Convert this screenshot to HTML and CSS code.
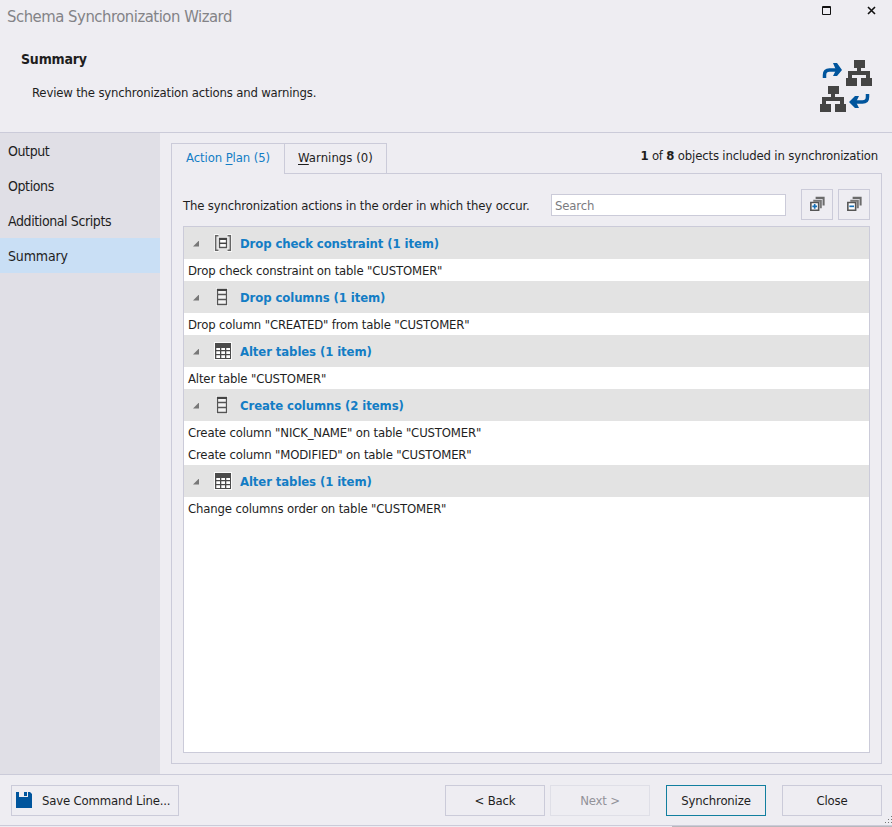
FILE: index.html
```
<!DOCTYPE html>
<html lang="en">
<head>
<meta charset="utf-8">
<title>Schema Synchronization Wizard</title>
<link rel="stylesheet" href="styles.css">
</head>
<body>
<svg class="defs" width="0" height="0">
  <symbol id="check" viewBox="0 0 18 18"><path fill="none" stroke="#f6f6f6" stroke-width="3" d="M5 1.500H1.500v15H5M13 1.500h3.500v15H13"/><path fill="none" stroke="#666" stroke-width="1.500" d="M4.500 1.700H1.700v14.600h2.800M13.500 1.700h2.800v14.600h-2.800"/><path fill="#f6f6f6" d="M4 3h10v12H4z"/><path fill="#fff" stroke="#555" stroke-width="1.300" d="M5.500 4.500h7v9h-7z"/><path stroke="#444" stroke-width="2" d="M5 5h8"/><path stroke="#444" stroke-width="1.500" d="M5 9.300h8"/></symbol>
  <symbol id="column" viewBox="0 0 18 18"><path fill="#fafafa" d="M2 0h12v18H2z"/><path fill="#f3f3f3" stroke="#555" stroke-width="1.300" d="M3.500 1.500h9v15h-9z"/><path stroke="#444" stroke-width="2" d="M3 2h10"/><path stroke="#555" stroke-width="1.300" d="M3 6.500h10M3 11.500h10"/></symbol>
  <symbol id="table" viewBox="0 0 18 18"><path fill="#fafafa" d="M0 0h18v18H0z"/><path fill="#4b4b4b" d="M1 1h16v16H1z"/><path fill="#fff" d="M2.300 6H6v2H2.300zM7.300 6H11v2H7.300zM12.300 6H16v2h-3.700zM2.300 9.300H6V12H2.300zM7.300 9.300H11V12H7.300zM12.300 9.300H16V12h-3.700zM2.300 13.300H6V16H2.300zM7.300 13.300H11V16H7.300zM12.300 13.300H16V16h-3.700z"/></symbol>
  <symbol id="stack" viewBox="0 0 16 16"><path fill="none" stroke="#6b6b6b" stroke-width="2.200" d="M6 2h8.500v8"/><path fill="none" stroke="#777" stroke-width="2.200" d="M3.500 5h8v8"/><path fill="#fff" stroke="#555" stroke-width="1.700" d="M.9 6.900h8.300v8.300H.9z"/></symbol>
  <symbol id="tree" viewBox="0 0 26 26"><path fill="#444" d="M8 0h11v8h-4v3h9v7h2v8H15v-8h5v-3H6v3h5v8H0v-8h2v-7h9V8H8z"/></symbol>
</svg>
<div class="window">
  <header class="header">
    <div class="titlebar">
      <h1>Schema Synchronization Wizard</h1>
      <svg class="controls" width="56" height="12" viewBox="0 0 56 12"><path fill="none" stroke="#111" d="M.5 1.500h8v8h-8zM0 2.500h9"/><path stroke="#111" stroke-width="1.600" d="m46 2 7 7m0-7-7 7"/></svg>
    </div>
    <div class="intro">
      <div>
        <h2>Summary</h2>
        <p>Review the synchronization actions and warnings.</p>
      </div>
      <svg width="54" height="54" viewBox="0 0 54 54"><use href="#tree" x="27" y="0" width="26" height="26"/><use href="#tree" x="1" y="26" width="26" height="26"/><path fill="none" stroke="#00559d" stroke-width="3.500" d="M5.500 18v-3q0-5 5-5h9M48.500 34v3q0 5-5 5h-9"/><path fill="#00559d" d="M14 3h4l5 7-5 6h-4l3-6zM40 36h-4l-6 6 6 6h4l-3-6z"/></svg>
    </div>
  </header>
  <div class="middle">
    <nav class="steps"><a>Output</a><a>Options</a><a>Additional Scripts</a><a class="current">Summary</a></nav>
    <main class="content">
      <div class="tabs">
        <div class="tab active">Action&nbsp;<u>P</u>lan (5)</div>
        <div class="tab"><u>W</u>arnings (0)</div>
        <div class="count"><b>1</b> of <b>8</b> objects included in synchronization</div>
      </div>
      <section class="panel">
        <div class="toolbar">
          <span class="hint">The synchronization actions in the order in which they occur.</span>
          <input class="search" placeholder="Search">
          <button class="button tool"><svg width="15" height="15" viewBox="0 0 16 16"><use href="#stack"/><path stroke="#176fb5" stroke-width="1.800" d="M2.500 11h5M5 8.500v5"/></svg></button>
          <button class="button tool"><svg width="15" height="15" viewBox="0 0 16 16"><use href="#stack"/><path stroke="#176fb5" stroke-width="1.800" d="M2.500 11h5"/></svg></button>
        </div>
        <div class="list">
          <div class="group"><i></i><svg><use href="#check"/></svg><b>Drop check constraint (1 item)</b></div>
          <div class="row">Drop check constraint on table "CUSTOMER"</div>
          <div class="group"><i></i><svg><use href="#column"/></svg><b>Drop columns (1 item)</b></div>
          <div class="row">Drop column "CREATED" from table "CUSTOMER"</div>
          <div class="group"><i></i><svg><use href="#table"/></svg><b>Alter tables (1 item)</b></div>
          <div class="row">Alter table "CUSTOMER"</div>
          <div class="group"><i></i><svg><use href="#column"/></svg><b>Create columns (2 items)</b></div>
          <div class="row">Create column "NICK_NAME" on table "CUSTOMER"</div>
          <div class="row">Create column "MODIFIED" on table "CUSTOMER"</div>
          <div class="group"><i></i><svg><use href="#table"/></svg><b>Alter tables (1 item)</b></div>
          <div class="row">Change columns order on table "CUSTOMER"</div>
        </div>
      </section>
    </main>
  </div>
  <footer class="footer">
    <button class="button save"><svg width="16" height="16" viewBox="0 0 16 16"><path fill="#00559d" d="M0 0h3v5h9V0h2l2 2v14H0z"/><path fill="#00559d" d="M8 0h3v4H8z"/></svg>Save Command Line...</button>
    <button class="button">&lt; Back</button>
    <button class="button next" disabled>Next &gt;</button>
    <button class="button sync">Synchronize</button>
    <button class="button close">Close</button>
    <svg class="grip" width="8" height="8" viewBox="0 0 8 8"><path fill="#777" d="M6 0h1v1H6zM3 3h1v1H3zM6 3h1v1H6zM0 6h1v1H0zM3 6h1v1H3zM6 6h1v1H6z"/></svg>
  </footer>
  <div class="edge"></div>
</div>
</body>
</html>
```
FILE: styles.css
```
* { box-sizing: border-box; }
body { margin: 0; background: #eeedf2; color: #1e1e1e; font: 13px/16px "DejaVu Sans Condensed", "DejaVu Sans", sans-serif; letter-spacing: -.17px; }
.defs, .grip { position: absolute; }
.window { display: flex; flex-direction: column; width: 892px; height: 827px; overflow: hidden; }
.header { height: 133px; border-bottom: 1px solid #cbcbd9; }
.titlebar { display: flex; justify-content: space-between; height: 46px; padding: 5px 14px 0 7px; }
h1 { margin: 0; font-size: 16.5px; font-weight: 400; line-height: 24px; color: #838387; letter-spacing: -.47px; }
.intro { display: flex; justify-content: space-between; padding: 4px 19px 0 21px; }
.intro > svg { margin-top: 10px; }
h2 { margin: 0; font-size: 14px; line-height: 18px; letter-spacing: -.2px; }
.intro p { margin: 17px 0 0 11px; }
.middle { display: flex; height: 641px; }
.steps { width: 160px; background: #e0dfe6; }
.steps a { display: block; height: 35px; padding-left: 8px; font-size: 14px; line-height: 36px; letter-spacing: -.4px; }
.steps .current { background: #c9dff5; letter-spacing: -.15px; }
.content { flex: 1; display: flex; flex-direction: column; padding: 10px 10px 10px 11px; }
.tabs { display: flex; height: 31px; margin-bottom: -1px; z-index: 1; }
.tab { height: 31px; padding: 0 0 0 13px; border: 1px solid #cbcbd9; border-left: 0; line-height: 28px; width: 102px; letter-spacing: .05px; }
.tab.active { width: 114px; padding-left: 14px; border-left: 1px solid #cbcbd9; border-bottom: 0; background: #eeedf2; color: #137dc5; letter-spacing: -.1px; }
u { text-decoration: underline; text-underline-offset: 2px; text-decoration-skip-ink: none; }
.count { margin: 5px 4px 0 auto; white-space: nowrap; }
.panel { flex: 1; padding: 15px 11px 10px; border: 1px solid #cbcbd9; }
.toolbar { display: flex; align-items: center; height: 31px; margin-bottom: 6px; }
.hint { flex: none; width: 368px; padding-top: 2px; white-space: nowrap; letter-spacing: -.16px; }
.search { width: 235px; height: 22px; margin: 0 15px 0 0; padding: 1px 3px 0; border: 1px solid #cbcbd9; background: #fff; font: inherit; letter-spacing: inherit; }
.search::placeholder { color: #7b7b80; }
.button { display: flex; align-items: center; justify-content: center; width: 100px; height: 31px; padding: 0; border: 1px solid #cbcbd9; background: none; color: #1e1e1e; font: inherit; letter-spacing: inherit; white-space: nowrap; }
.tool { width: 32px; margin-right: 5px; padding: 0 0 2px 1px; }
.tool:last-child { margin-right: 0; }
.list { height: 527px; border: 1px solid #cbcbd9; background: #fff; }
.group { display: flex; align-items: center; height: 32px; background: #e3e3e3; color: #137dc5; letter-spacing: -.1px; }
.group i { width: 6px; height: 6px; margin: 1px 15px 0 9px; background: #777; clip-path: polygon(100% 0, 100% 100%, 0 100%); }
.group svg { width: 18px; height: 18px; margin-right: 8px; }
.group b { padding-top: 1px; }
.row { height: 22px; padding-left: 4px; line-height: 23px; letter-spacing: -.16px; }
.footer { display: flex; height: 51px; padding: 10px 10px 0 11px; border-top: 1px solid #cbcbd9; position: relative; }
.save { width: 168px; margin-right: 266px; padding: 0 7px 0 4px; justify-content: flex-start; gap: 10px; }
.save svg { margin-bottom: 2px; }
.next { margin-left: 5px; color: #929299; border-color: #dfdfe7; }
.sync { margin-left: 16px; border-color: #117f9f; }
.close { margin-left: 16px; }
.grip { right: -1px; bottom: 1px; }
.edge { height: 2px; border-top: 1px solid #cbcbd9; background: linear-gradient(90deg, #eeedf2 672px, #b8b8bc 672px); }
```
